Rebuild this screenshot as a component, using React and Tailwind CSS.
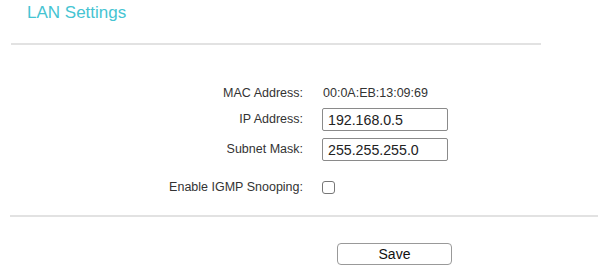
import { useState } from 'react';

export default function App() {
  const [ip, setIp] = useState('192.168.0.5');
  const [mask, setMask] = useState('255.255.255.0');
  const [igmp, setIgmp] = useState(false);

  const labelCls = 'w-[303px] shrink-0 text-right text-[12.5px] text-[#333]';
  const inputCls =
    'w-[126px] h-[23px] px-[5px] border border-[#8a8a8a] rounded-[2px] text-[14.2px] text-[#222] outline-none';

  return (
    <div className="w-[600px] h-[271px] bg-white font-['Liberation_Sans',Arial,sans-serif] overflow-hidden">
      <h1 className="pl-[27px] pt-[3px] h-[23px] leading-[20px] text-[17px] text-[#45c4d2]">
        LAN Settings
      </h1>

      <div className="ml-[11px] mt-[20px] w-[530px] h-[2px] bg-[#e2e2e2]" />

      <div className="mt-[37px] flex flex-col">
        <div className="flex items-center h-[23px] gap-[20px]">
          <span className={labelCls}>MAC Address:</span>
          <span className="text-[12.5px] text-[#333]">00:0A:EB:13:09:69</span>
        </div>

        <div className="mt-[3px] flex items-center h-[23px] gap-[19px]">
          <span className={labelCls}>IP Address:</span>
          <input value={ip} onChange={(e) => setIp(e.target.value)} className={inputCls} />
        </div>

        <div className="mt-[7px] flex items-center h-[23px] gap-[19px]">
          <span className={labelCls}>Subnet Mask:</span>
          <input value={mask} onChange={(e) => setMask(e.target.value)} className={inputCls} />
        </div>

        <div className="mt-[15px] flex items-center h-[23px] gap-[19px]">
          <span className={labelCls}>Enable IGMP Snooping:</span>
          <input
            type="checkbox"
            checked={igmp}
            onChange={(e) => setIgmp(e.target.checked)}
            className="appearance-none w-[13px] h-[13px] border border-[#777] rounded-[3px] bg-white checked:bg-[#45c4d2]"
          />
        </div>
      </div>

      <div className="ml-[10px] mt-[16px] w-[588px] h-[2px] bg-[#e2e2e2]" />

      <div className="mt-[25px] pl-[337px]">
        <button
          type="button"
          className="w-[115px] h-[22px] border border-[#999] rounded-[4px] bg-white text-[14px] text-[#111]"
        >
          Save
        </button>
      </div>
    </div>
  );
}
